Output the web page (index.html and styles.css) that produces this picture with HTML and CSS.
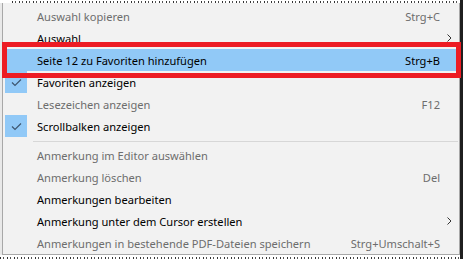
FILE: index.html
```html
<!DOCTYPE html>
<html>
<head>
    <meta charset="UTF-8">
    <title>Kontextmenü</title>
    <link rel="stylesheet" href="styles.css">
</head>
<body>

<div class="desk">
    <div class="bg-strip bg-top"></div>

    <div class="menu">
        <div class="item off"><span class="label">Auswahl kopieren</span><span class="key">Strg+C</span></div>
        <div class="item"><span class="label">Auswahl</span><span class="key"></span><span class="sub"><svg width="5" height="8" viewBox="0 0 5 8"><polyline points="0.5,0.5 4,4 0.5,7.5" fill="none" stroke="#333" stroke-width="1"/></svg></span></div>
        <div class="item hover"><span class="label">Seite 12 zu Favoriten hinzufügen</span><span class="key">Strg+B</span></div>
        <div class="item"><span class="check"><svg width="22" height="22" viewBox="0 0 22 22"><polyline points="7,11.5 10,14.5 16,8.5" fill="none" stroke="#3e5670" stroke-width="1.2"/></svg></span><span class="label">Favoriten anzeigen</span></div>
        <div class="item off"><span class="label">Lesezeichen anzeigen</span><span class="key">F12</span></div>
        <div class="item"><span class="check"><svg width="22" height="22" viewBox="0 0 22 22"><polyline points="7,11.5 10,14.5 16,8.5" fill="none" stroke="#3e5670" stroke-width="1.2"/></svg></span><span class="label">Scrollbalken anzeigen</span></div>

        <div class="sep"></div>

        <div class="item off"><span class="label">Anmerkung im Editor auswählen</span></div>
        <div class="item off"><span class="label">Anmerkung löschen</span><span class="key">Del</span></div>
        <div class="item"><span class="label">Anmerkungen bearbeiten</span></div>
        <div class="item"><span class="label">Anmerkung unter dem Cursor erstellen</span><span class="key"></span><span class="sub"><svg width="5" height="8" viewBox="0 0 5 8"><polyline points="0.5,0.5 4,4 0.5,7.5" fill="none" stroke="#333" stroke-width="1"/></svg></span></div>
        <div class="item off"><span class="label">Anmerkungen in bestehende PDF-Dateien speichern</span><span class="key">Strg+Umschalt+S</span></div>
    </div>

    <div class="bg-strip bg-bottom"></div>
</div>
<div class="shadow"></div>

<div class="mark"></div>

</body>
</html>
```

FILE: styles.css
```css
body {
    margin: 0;
    padding: 0;
    width: 463px;
    height: 259px;
    overflow: hidden;
    display: flex;
    background: #fff;
    font-family: "Noto Sans", "Open Sans", sans-serif;
    font-size: 11.1px;
}

.desk {
    width: 460px;
    display: flex;
    flex-direction: column;
    background: #e9e9e9;
}

.shadow {
    width: 3px;
    background: #1f1f1f;
}

/* glyph fragments of the page behind the menu */
.bg-strip {
    height: 3px;
    background-color: #fff;
    background-image: repeating-linear-gradient(90deg, #333 0 1px, transparent 1px 3px, #555 3px 4px, transparent 4px 7px);
}

.bg-top {
    background-size: 100% 2px;
    background-repeat: no-repeat;
    background-position: 12px bottom;
}

.bg-bottom {
    height: 4px;
    background-size: 100% 2px;
    background-repeat: no-repeat;
    background-position: 0 2px;
}

.menu {
    margin-left: 2px;
    width: 458px;
    box-sizing: border-box;
    background: #f2f2f2;
    border: 1px solid #a8a8a8;
    border-top: none;
    padding-top: 2px;
}

.item {
    display: grid;
    grid-template-columns: 34px 1fr auto 19px;
    align-items: center;
    height: 22px;
    color: #000;
}

.item.off {
    color: #6d6d6d;
}

.item.hover {
    background: #91c9f7;
}

.check {
    grid-column: 1;
    display: block;
    width: 22px;
    height: 22px;
    margin-left: 2px;
    background: #91c9f7;
}

.check svg {
    display: block;
}

.label {
    grid-column: 2;
    white-space: nowrap;
}

.key {
    grid-column: 3;
    white-space: nowrap;
}

.sub {
    grid-column: 4;
    padding-left: 7px;
    display: flex;
    align-items: center;
}

.sep {
    height: 7px;
    box-sizing: border-box;
    padding-top: 4px;
    margin-left: 30px;
    margin-right: 1px;
}

.sep::before {
    content: "";
    display: block;
    height: 1px;
    background: #d7d7d7;
}

.mark {
    position: absolute;
    left: 2px;
    top: 42px;
    width: 459px;
    height: 36px;
    box-sizing: border-box;
    border: 5px solid #ed1c24;
}
```
